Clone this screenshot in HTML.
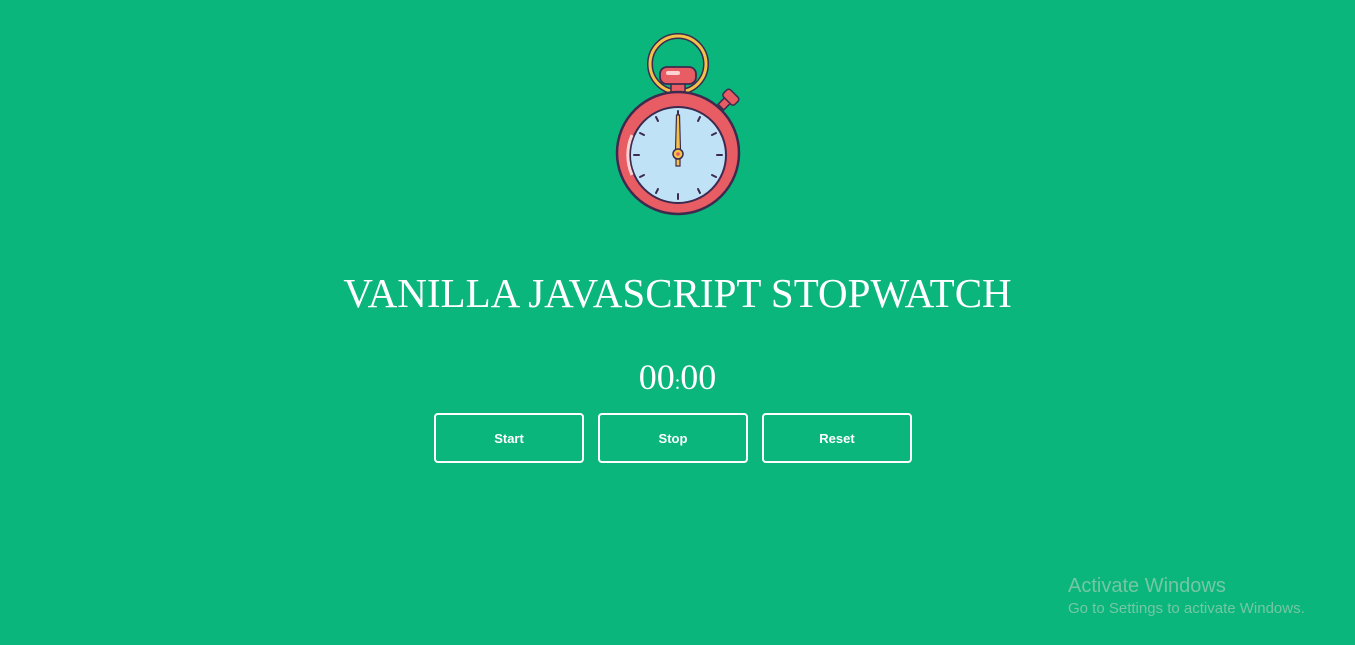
<!DOCTYPE html>
<html><head><meta charset="utf-8"><style>
html,body{margin:0;padding:0;width:1355px;height:645px;overflow:hidden;background:#0ab67b;}
body{position:relative;font-family:"Liberation Sans",sans-serif;}
svg.sw{position:absolute;left:0;top:0;}
.title{position:absolute;left:0;width:1355px;top:268px;text-align:center;color:#fff;font-family:"Liberation Serif",serif;font-size:41px;line-height:50px;white-space:nowrap;}
.time{position:absolute;left:0;width:1355px;top:355px;text-align:center;color:#fff;font-family:"Liberation Serif",serif;font-size:36px;line-height:44px;}
.time span{font-size:20px;}
.btn{position:absolute;top:413px;width:146px;height:46px;border:2px solid #fff;border-radius:4px;color:#fff;font-size:13px;font-weight:bold;display:flex;align-items:center;justify-content:center;}
.act{position:absolute;left:1068px;color:#74c7a4;white-space:nowrap;}
</style></head><body>
<svg class="sw" width="1355" height="645" viewBox="0 0 1355 645">
 <circle cx="678" cy="64" r="28" fill="none" stroke="#3d2a4f" stroke-width="6"/>
 <circle cx="678" cy="64" r="28" fill="none" stroke="#f3c24b" stroke-width="3"/>
 <g transform="rotate(45 728 100)">
  <rect x="724" y="100" width="8" height="10" fill="#e85c63" stroke="#3d2a4f" stroke-width="1.5"/>
  <rect x="720" y="91" width="16" height="10" rx="3" fill="#e85c63" stroke="#3d2a4f" stroke-width="1.5"/>
 </g>
 <rect x="671" y="82" width="14" height="12" fill="#e85c63" stroke="#3d2a4f" stroke-width="1.5"/>
 <rect x="660" y="67" width="36" height="17" rx="7" fill="#e85c63" stroke="#3d2a4f" stroke-width="1.8"/>
 <rect x="666" y="71" width="14" height="4" rx="2" fill="#fbd3d3"/>
 <circle cx="678" cy="153" r="61" fill="#e85c63" stroke="#3d2a4f" stroke-width="2.5"/>
 <circle cx="678" cy="155" r="48" fill="#bfe2f6" stroke="#3d2a4f" stroke-width="2"/>
 <path d="M632 135 a50 50 0 0 0 0 40" stroke="#fbd3d3" stroke-width="3" fill="none"/>
 <g stroke="#3d2a4f" stroke-width="2" stroke-linecap="round">
  <line x1="678" y1="111" x2="678" y2="116"/><line x1="678" y1="194" x2="678" y2="199"/>
  <line x1="634" y1="155" x2="639" y2="155"/><line x1="717" y1="155" x2="722" y2="155"/>
  <line x1="700" y1="117" x2="698" y2="121"/><line x1="716" y1="133" x2="712" y2="135"/>
  <line x1="716" y1="177" x2="712" y2="175"/><line x1="700" y1="193" x2="698" y2="189"/>
  <line x1="656" y1="117" x2="658" y2="121"/><line x1="640" y1="133" x2="644" y2="135"/>
  <line x1="640" y1="177" x2="644" y2="175"/><line x1="656" y1="193" x2="658" y2="189"/>
 </g>
 <path d="M676.5 115 L679.5 115 L680.5 150 L675.5 150 Z" fill="#f3c24b" stroke="#3d2a4f" stroke-width="1.2"/>
 <path d="M676 158 L680 158 L680 166 L676 166 Z" fill="#f3c24b" stroke="#3d2a4f" stroke-width="1.2"/>
 <circle cx="678" cy="154" r="5" fill="#f3c24b" stroke="#3d2a4f" stroke-width="1.5"/>
 <circle cx="678" cy="154" r="1.8" fill="#e85c63"/>
</svg>
<div class="title">VANILLA JAVASCRIPT STOPWATCH</div>
<div class="time">00<span>:</span>00</div>
<div class="btn" style="left:434px">Start</div>
<div class="btn" style="left:598px">Stop</div>
<div class="btn" style="left:762px">Reset</div>
<div class="act" style="top:575px;font-size:20px;">Activate Windows</div>
<div class="act" style="top:600px;font-size:15px;">Go to Settings to activate Windows.</div>
</body></html>
